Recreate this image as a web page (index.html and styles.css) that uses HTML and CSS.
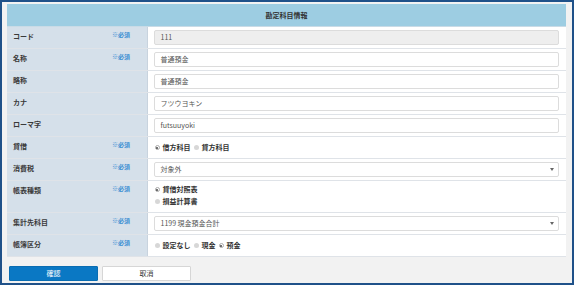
FILE: index.html
```html
<!DOCTYPE html>
<html lang="ja">
<head>
<meta charset="utf-8">
<link rel="stylesheet" href="styles.css">
</head>
<body>
<div class="frame">
  <table class="form">
    <colgroup><col class="col-label"><col></colgroup>
    <tr class="head"><th colspan="2">勘定科目情報</th></tr>
    <tr>
      <td class="label"><span class="name">コード</span><span class="req">※必須</span></td>
      <td class="value"><div class="field disabled">111</div></td>
    </tr>
    <tr>
      <td class="label"><span class="name">名称</span><span class="req">※必須</span></td>
      <td class="value"><div class="field">普通預金</div></td>
    </tr>
    <tr>
      <td class="label"><span class="name">略称</span></td>
      <td class="value"><div class="field">普通預金</div></td>
    </tr>
    <tr>
      <td class="label"><span class="name">カナ</span></td>
      <td class="value"><div class="field">フツウヨキン</div></td>
    </tr>
    <tr>
      <td class="label"><span class="name">ローマ字</span></td>
      <td class="value"><div class="field">futsuuyoki</div></td>
    </tr>
    <tr>
      <td class="label"><span class="name">貸借</span><span class="req">※必須</span></td>
      <td class="value radios"><span class="radio on"></span><b>借方科目</b><span class="radio"></span><b>貸方科目</b></td>
    </tr>
    <tr>
      <td class="label"><span class="name">消費税</span><span class="req">※必須</span></td>
      <td class="value"><div class="field select">対象外<span class="arrow"></span></div></td>
    </tr>
    <tr class="tall">
      <td class="label"><span class="name">帳表種類</span><span class="req">※必須</span></td>
      <td class="value radios stack">
        <div><span class="radio on"></span><b>貸借対照表</b></div>
        <div><span class="radio"></span><b>損益計算書</b></div>
      </td>
    </tr>
    <tr>
      <td class="label"><span class="name">集計先科目</span><span class="req">※必須</span></td>
      <td class="value"><div class="field select">1199 現金預金合計<span class="arrow"></span></div></td>
    </tr>
    <tr>
      <td class="label"><span class="name">帳簿区分</span><span class="req">※必須</span></td>
      <td class="value radios"><span class="radio"></span><b>設定なし</b><span class="radio"></span><b>現金</b><span class="radio on"></span><b>預金</b></td>
    </tr>
  </table>
  <div class="buttons">
    <button class="btn primary">確認</button>
    <button class="btn">取消</button>
  </div>
</div>
</body>
</html>
```
FILE: styles.css
```css
* { box-sizing: border-box; }
html, body { margin: 0; padding: 0; }
body {
  font-family: "Noto Sans CJK JP", "Noto Sans", sans-serif;
  font-size: 7px;
  color: #333;
  background: #f2f2f2;
}
.frame {
  width: 574px;
  height: 285px;
  border: 2px solid #1f5189;
  background: #f2f2f2;
  padding: 2px 4px 0 5px;
}
.form {
  width: 559px;
  border-collapse: collapse;
  table-layout: fixed;
}
.col-label { width: 140px; }
.head th {
  height: 22px;
  background: #9dcde2;
  font-weight: bold;
  font-size: 7px;
  color: #333;
  text-align: center;
  border-bottom: 1px solid #c9dbe6;
}
.form td {
  height: 22px;
  border-bottom: 1px solid #dfe3e8;
  vertical-align: top;
}
.form tr.tall td { height: 32px; }
.label {
  background: #d5e0ea;
  padding: 4px 0 0 6px;
  border-right: 1px solid #c8d3de;
  position: relative;
}
.label .name {
  font-weight: bold;
  color: #3a3a3a;
}
.label .req {
  position: absolute;
  left: 105px;
  top: 3px;
  font-size: 6px;
  color: #3d8fd3;
  font-weight: bold;
}
.value {
  background: #fff;
  padding: 3px 7px 0 6px;
}
.field {
  height: 15px;
  border: 1px solid #dcdcdc;
  border-radius: 2px;
  background: #fff;
  padding: 0 0 0 6px;
  line-height: 13px;
  color: #555;
  position: relative;
}
.field.disabled { background: #eeeeee; }
.field .arrow {
  position: absolute;
  right: 4px;
  top: 5px;
  width: 0;
  height: 0;
  border-left: 2px solid transparent;
  border-right: 2px solid transparent;
  border-top: 3px solid #666;
}
.radios {
  padding-top: 5px;
  padding-left: 7px;
}
.radios b {
  font-weight: bold;
  color: #333;
  margin-right: 3px;
}
.radios.stack { padding-top: 3px; }
.radios.stack div { height: 12px; }
.radio {
  display: inline-block;
  width: 5px;
  height: 5px;
  border-radius: 50%;
  background: #d7d7d7;
  margin-right: 3px;
  vertical-align: -0.5px;
}
.radio.on {
  background: #fff;
  border: 1px solid #aaa;
  position: relative;
}
.radio.on::after {
  content: "";
  position: absolute;
  left: 0.5px;
  top: 0.5px;
  width: 2px;
  height: 2px;
  border-radius: 50%;
  background: #444;
}
.buttons {
  display: flex;
  gap: 4px;
  margin-top: 9px;
  padding-left: 2px;
}
.btn {
  width: 89px;
  height: 15px;
  font-family: inherit;
  font-size: 7px;
  border: 1px solid #d6d6d6;
  background: #fff;
  color: #333;
  padding: 0;
  border-radius: 1px;
}
.btn.primary {
  background: #0a78c4;
  border-color: #0a6db2;
  color: #fff;
}
```
